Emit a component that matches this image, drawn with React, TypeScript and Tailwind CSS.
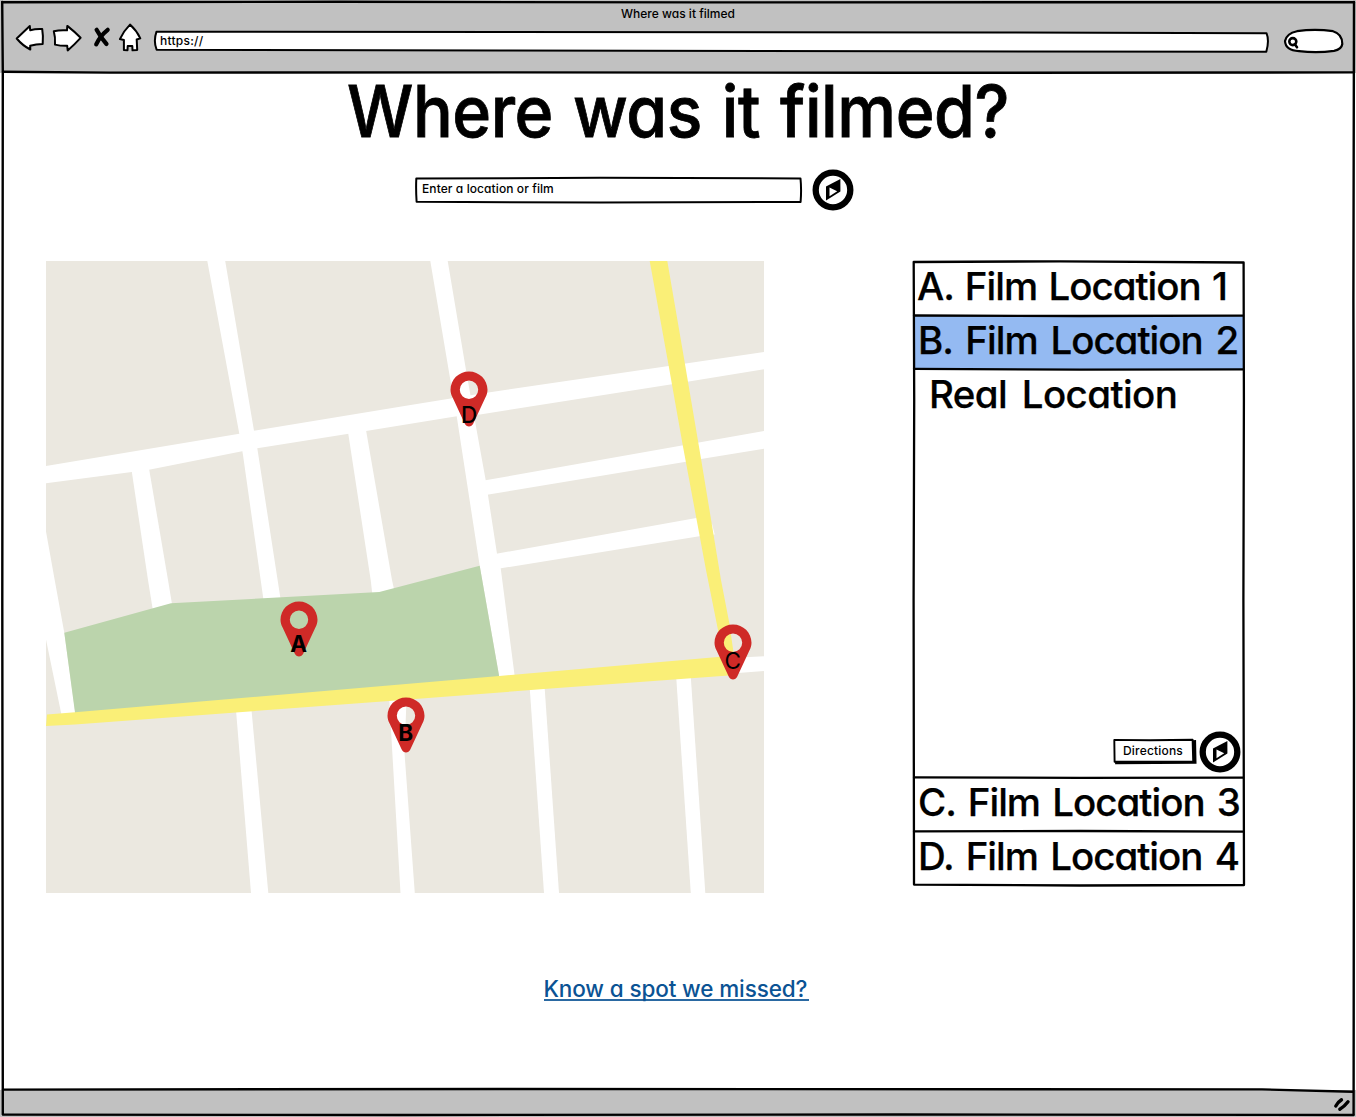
import type { ReactNode } from "react";

const ink = { fill: "none", stroke: "#000", strokeLinecap: "round", strokeLinejoin: "round" } as const;

function WindowFrame() {
  return (
    <svg className="pointer-events-none absolute inset-0 h-full w-full" viewBox="0 0 1356 1117" {...ink} strokeWidth="2.4">
      <path d="M2.2 2.2 L340 1.8 L700 2.4 L1354 2.2" />
      <path d="M2.200 2 L2.800 72 L2.300 600 L2.800 1114" />
      <path d="M1354 2 L1353.4 300 L1354 700 L1353.6 1114" />
      <path d="M3 71.800 L110 72.600 L500 72.4 L900 72.800 L1353 72.4" />
      <path d="M3 1089.6 L500 1089 L1262 1089.4 Q1310 1090.6 1353 1091.8" />
      <path d="M3 1114.6 L400 1115 L900 1114.5 L1353.6 1115" />
    </svg>
  );
}

function NavIcons() {
  return (
    <svg className="h-[32px] w-[130px]" viewBox="14 21 130 32" {...ink} fill="#fff" strokeWidth="2">
      <path d="M16.7 37.5 Q23 31.500 29.8 25 L30.200 29.200 Q36 27.600 42.200 28 Q43.400 35 42.700 42.900 Q36 43 30.200 44.700 L30.300 48.500 Q22.500 44.500 16.700 37.500 Z" />
      <path d="M53.800 30.200 Q60 28.700 67 29.300 L67.300 24.900 Q75 31 80.600 36.800 Q74.500 43.500 67.700 49.400 L67.200 44.800 Q61 45 55 43.600 Q55.500 36 53.800 30.200 Z" />
      <g strokeWidth="4.200">
        <path d="M96.600 28.800 Q101 37 106.500 43" />
        <path d="M107.700 28.800 Q100 35 96.200 43.300" />
      </g>
      <path d="M130 23.600 Q136.500 29.500 140.300 37.400 L136.700 38.500 L137.200 48.900 L132.500 49.300 L132.300 45 L127.700 45 L127.500 49.200 L123.900 49 L123.900 39 L119.900 38.100 Q124 29.500 130 23.600 Z" />
    </svg>
  );
}

function AddressBar() {
  return (
    <div className="relative flex h-[24px] w-[1116px] items-center">
      <svg className="absolute inset-0 h-full w-full" viewBox="153 29 1116 24" {...ink} fill="#fff" strokeWidth="2">
        <path d="M156.500 31.700 L500 31.900 L1000 32.500 L1266.500 33.200 Q1269.500 40.500 1266.300 51.700 L900 51.300 L500 50.400 L156.600 49.700 Q153.200 41 156.500 31.700 Z" />
      </svg>
      <span className="relative ml-[7px] text-[12px] leading-[24px] tracking-[0.25px]">https://</span>
    </div>
  );
}

function SearchPill() {
  return (
    <svg className="h-[28px] w-[62px]" viewBox="1283 27 62 28" {...ink} fill="#fff" strokeWidth="2.200">
      <path d="M1285 41 Q1286.500 33.500 1297 31.200 Q1315 28.600 1333 31.200 Q1342.500 34 1342.300 44 Q1341.500 49.500 1334 50.800 Q1317 53.300 1299 51.100 Q1285.500 50.500 1285 41 Z" />
      <circle cx="1292.800" cy="41.600" r="3.500" strokeWidth="2.600" />
      <path d="M1294.800 44.300 L1297 47.300" strokeWidth="2.600" />
    </svg>
  );
}

function Compass({ className }: { className: string }) {
  return (
    <svg className={className} viewBox="0 0 42 42">
      <circle cx="21" cy="21" r="17.300" fill="#fff" stroke="#000" strokeWidth="6.300" />
      <path d="M28.400 10 V22.600 L14 31.600 V17.400 Z" fill="#000" />
      <path d="M17.500 18.400 L25.200 22.300 L17.500 27.200 Z" fill="#fff" />
    </svg>
  );
}

function StreetMap() {
  return (
    <svg className="block h-full w-full" viewBox="46 261 718 632">
      <rect x="46" y="261" width="718" height="632" fill="#ebe8e0" />
      <g fill="#fff">
        <path d="M207.300 261 H225.200 L254 430.700 L257.300 448.300 L280.700 600 H263.500 L243 455 L239.300 433.700 Z" />
        <path d="M46 466 L239.300 433.700 L254 430.700 L406 405.700 L480 393.700 L668.700 366 L764 352 V369.300 L672 384.300 L480 414.500 L456.700 416.300 L366 431 L257.300 448.300 L149 469.700 L46 483.200 Z" />
        <path d="M430.300 261 H447.700 L466 370 L475.700 425 L485.700 480.300 L497 553.700 L500.700 568.300 L514.800 677 H499.300 L479.700 565.700 L456.700 416.300 L450 378 Z" />
        <path d="M484 480.600 L683.300 445.300 L764 431 V448.700 L701 459 L686 461.700 L484 495.200 Z" />
        <path d="M495 554 L696.300 518 L712 524 L714.700 534.500 L699.300 536.300 L498 568.800 Z" />
        <path d="M131.700 471 L149 468.500 L168 580 L172.300 606 L152.700 609 L148 580 Z" />
        <path d="M348 432 L366 430 L392 580 L394.200 590 L372.300 594 L370.700 580 Z" />
        <path d="M46 531.500 L54.700 580 L64.300 632.700 L75.500 714 H61.300 L46 639.500 Z" />
        <path d="M720 658.500 L764 656.300 V671 L738 673 Z" />
        <path d="M236 710 H251.500 L268.300 893 H251 Z" />
        <path d="M389.300 699 H406.500 L404.500 753 L414.800 893 H400.500 L391 730 Z" />
        <path d="M529.600 686 H544.500 L559 893 H544 Z" />
        <path d="M676.200 677 H690.800 L705.300 893 H690.800 Z" />
      </g>
      <path d="M64.300 632.700 L171 603.300 L379.300 592 L479.700 565.700 L499.300 677 L75.200 714 Z" fill="#bbd4ac" />
      <g fill="#faef77">
        <path d="M47 714.600 L75 712.300 L406 684 L499.300 676 L718 657 L736 656 L732 675.200 L544 689 L389 701 L75 724.500 L46 726 Z" />
        <path d="M649.700 261 H667.300 L684.300 360 L700.700 456.700 L721 580 L729.300 623 L734 656 H722 L718 630 L706 570 L696.300 518 L682.700 445 L668.700 366 Z" />
      </g>
    </svg>
  );
}

function Pin({ place, label, labelClass }: { place: string; label: string; labelClass: string }) {
  return (
    <div className={`absolute flex w-[38px] justify-center ${place}`}>
      <svg className="h-[56px] w-[38px] shrink-0" viewBox="0 0 38 56">
        <path
          fillRule="evenodd"
          fill="#cf2a27"
          d="M19 .4 C29.300 .4 37.500 8.600 37.500 18.800 C37.500 21.800 36.700 24 35.400 26.600 L23.300 52.600 C21.600 56.400 16.400 56.400 14.700 52.600 L2.600 26.600 C1.300 24 .5 21.800 .5 18.800 C.5 8.600 8.700 .4 19 .4 Z M19 9.600 A9.200 9.200 0 1 0 19 28 A9.200 9.200 0 1 0 19 9.600 Z"
        />
      </svg>
      <span className={`absolute text-[22.500px] leading-[24px] ${labelClass}`}>{label}</span>
    </div>
  );
}

function Row({ children, className = "" }: { children: ReactNode; className?: string }) {
  return (
    <div className={`h-[54px] whitespace-nowrap text-[38.500px] leading-[49px] tracking-[-1px] [-webkit-text-stroke:0.25px_black] ${className}`}>
      {children}
    </div>
  );
}

function LocationList() {
  return (
    <section className="relative h-[624px] w-[331px]">
      <Row className="pl-[4px] [word-spacing:2px]">A. Film Location 1</Row>
      <Row className="bg-[#94baf2] pl-[5px] [word-spacing:3.500px]">B. Film Location 2</Row>
      <div className="flex h-[408px] flex-col justify-between">
        <p className="pl-[16px] text-[38.500px] leading-[49px] tracking-[-0.600px] [-webkit-text-stroke:0.25px_black] [word-spacing:5px]">Real Location</p>
        <div className="flex items-center justify-end gap-[2px] pb-[5px] pr-[3px]">
          <button className="relative -mt-[2px] flex h-[27px] w-[84px] justify-center pr-[4px] text-[12px] leading-[25px] tracking-[0.180px]">
            <svg className="absolute inset-0 h-full w-full" viewBox="1113 738 84 27" {...ink}>
              <path d="M1117 762.400 L1194.600 761.900 L1194.200 742" strokeWidth="3.800" strokeLinecap="square" strokeLinejoin="miter" />
              <path d="M1114.300 739.900 L1150 740.200 L1192.600 739.700 L1193.200 761.500 L1114.600 761.800 Z" fill="#fff" strokeWidth="1.900" />
            </svg>
            <span className="relative">Directions</span>
          </button>
          <Compass className="h-[42px] w-[42px]" />
        </div>
      </div>
      <Row className="pl-[5px] [word-spacing:3px]">C. Film Location 3</Row>
      <Row className="pl-[5px] [word-spacing:3px]">D. Film Location 4</Row>
      <svg className="pointer-events-none absolute inset-0 h-full w-full overflow-visible" viewBox="913 262 331 624" {...ink} strokeWidth="2.300">
        <path d="M913.700 262 L1060 261.300 L1243.600 262.500 L1243.900 400 L1243.400 600 L1244 885 L1080 885.500 L914 884.600 L913.600 600 L914.200 400 Z" />
        <path d="M914 315.500 L1080 316 L1243 315.600" />
        <path d="M914 368.900 L1080 369.700 L1243 369.300" />
        <path d="M914 777.300 L1080 777.800 L1243 777.600" />
        <path d="M914 831.300 L1080 831 L1243 831.700" />
      </svg>
    </section>
  );
}

export default function App() {
  return (
    <div className="relative flex h-[1117px] w-[1356px] flex-col overflow-hidden bg-white font-['Inter',sans-serif] font-medium text-black [font-feature-settings:'cv11']">
      <header className="h-[73px] bg-[#c1c1c1]">
        <p className="h-[28px] text-center text-[12px] leading-[28px]">Where was it filmed</p>
        <div className="flex h-[28px] items-center pl-[14px]">
          <div className="-mt-[9px]">
            <NavIcons />
          </div>
          <div className="-mt-[2px] ml-[9px]">
            <AddressBar />
          </div>
          <div className="-mt-[2px] ml-[14px]">
            <SearchPill />
          </div>
        </div>
      </header>

      <main className="flex flex-1 flex-col">
        <h1 className="h-[76px] origin-[678px_50%] scale-x-[0.932] text-center text-[71px] leading-[76px] tracking-[-0.500px] [-webkit-text-stroke:0.8px_black] [word-spacing:3px]">
          Where was it filmed?
        </h1>
        <div className="mt-[19px] flex h-[44px] items-center pl-[414px]">
          <div className="relative -mt-px flex h-[28px] w-[389px] items-center">
            <svg className="absolute inset-0 h-full w-full" viewBox="414 175.500 389 28" {...ink} fill="#fff" strokeWidth="2">
              <path d="M416.300 178 L600 177.300 L800.500 178 Q801.600 189 800.600 201.500 L600 202 L416.600 201.300 Q415.800 189 416.300 178 Z" />
            </svg>
            <span className="relative -mt-px ml-[8px] text-[12px] tracking-[0.090px]">Enter a location or film</span>
          </div>
          <Compass className="ml-[8.500px] h-[42px] w-[42px]" />
        </div>

        <div className="mt-[49px] flex items-start pl-[46px]">
          <section className="relative h-[632px] w-[718px]">
            <StreetMap />
            <Pin place="left-[403.700px] top-[110.300px]" label="D" labelClass="top-[31.500px] ml-px" />
            <Pin place="left-[233.700px] top-[340.300px]" label="A" labelClass="top-[31px] font-bold" />
            <Pin place="left-[340.700px] top-[436.300px]" label="B" labelClass="top-[24px] font-bold" />
            <Pin place="left-[667.700px] top-[363.300px]" label="C" labelClass="top-[25px] font-normal" />
          </section>
          <div className="ml-[149px] mt-px">
            <LocationList />
          </div>
        </div>

        <div className="mt-[82px] flex justify-center pr-[4px]">
          <a href="#" className="flex h-[26px] w-[265px] items-start whitespace-nowrap border-b-2 border-[#2a69a2] text-[22.500px] leading-[27px] tracking-[-0.120px] text-[#0b5394]">
            Know a spot we missed?
          </a>
        </div>
      </main>

      <footer className="flex h-[27px] items-center justify-end bg-[#c1c1c1] pr-[5px]">
        <svg className="h-[16px] w-[18px]" viewBox="1333 1096 18 16" {...ink} strokeWidth="3.400">
          <path d="M1335.800 1106 Q1338 1102 1341.500 1099.800" />
          <path d="M1339.800 1109.300 Q1344 1107 1348 1101.800" />
        </svg>
      </footer>
      <WindowFrame />
    </div>
  );
}
